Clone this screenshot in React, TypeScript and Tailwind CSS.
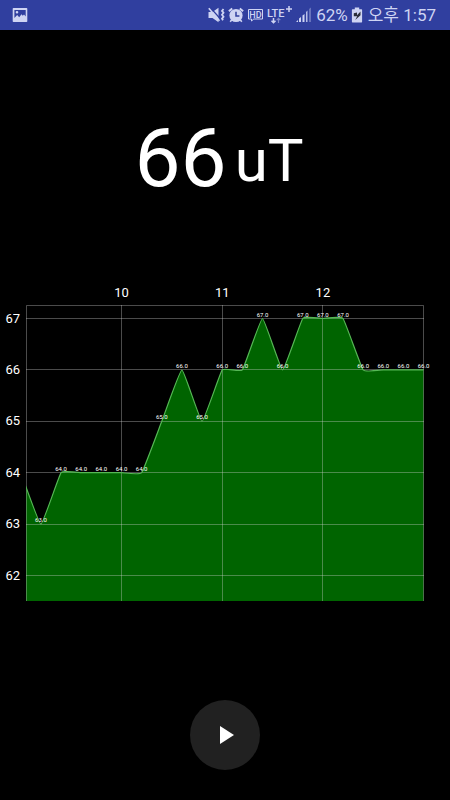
import React, { useState } from 'react';

interface Sample {
  time: number;
  value: number;
}

interface Point {
  x: number;
  y: number;
}

const values = [64, 63, 64, 64, 64, 64, 64, 65, 66, 65, 66, 66, 67, 66, 67, 67, 67, 66, 66, 66, 66];
const samples: Sample[] = values.map((value, i) => ({ time: 9 + i * 0.2, value }));

const PLOT = { left: 26, right: 424, top: 25, bottom: 321 };

const toX = (time: number) => 121.5 + (time - 10) * 100.7;
const toY = (value: number) => 38.5 + (67 - value) * 51.4;

// slightly smoothed line, each handle follows the neighbouring points
function smoothPath(points: Point[], tension = 0.05): string {
  const at = (i: number) => points[Math.min(Math.max(i, 0), points.length - 1)];
  let d = `M${points[0].x},${points[0].y}`;
  for (let i = 1; i < points.length; i++) {
    const before = at(i - 2);
    const prev = at(i - 1);
    const cur = at(i);
    const next = at(i + 1);
    const c1x = prev.x + (cur.x - before.x) * tension;
    const c1y = prev.y + (cur.y - before.y) * tension;
    const c2x = cur.x - (next.x - prev.x) * tension;
    const c2y = cur.y - (next.y - prev.y) * tension;
    d += ` C${c1x},${c1y} ${c2x},${c2y} ${cur.x},${cur.y}`;
  }
  return d;
}

function FieldChart() {
  const points = samples.map(s => ({ x: toX(s.time), y: toY(s.value) }));
  const line = smoothPath(points);
  const area = `${line} V${PLOT.bottom} H${points[0].x} Z`;

  return (
    <svg viewBox="0 0 450 325" className="block w-full" role="img" aria-label="Magnetic field history">
      <defs>
        <clipPath id="plot">
          <rect x={PLOT.left} y={PLOT.top} width={PLOT.right - PLOT.left} height={PLOT.bottom - PLOT.top} />
        </clipPath>
      </defs>

      <g clipPath="url(#plot)">
        <path d={area} fill="#006400" />
      </g>

      <g stroke="#d0d0d0" strokeOpacity="0.36" strokeWidth="1">
        {[67, 66, 65, 64, 63, 62].map(v => (
          <line key={v} x1={PLOT.left} x2={PLOT.right} y1={Math.floor(toY(v)) + 0.5} y2={Math.floor(toY(v)) + 0.5} />
        ))}
        {[10, 11, 12].map(t => (
          <line key={t} y1={PLOT.top} y2={PLOT.bottom} x1={Math.floor(toX(t)) + 0.5} x2={Math.floor(toX(t)) + 0.5} />
        ))}
        <path d="M26.5 321V25.5H423.5V321" fill="none" />
      </g>

      <g clipPath="url(#plot)">
        <path d={line} fill="none" stroke="#55b855" strokeWidth="1.2" />
      </g>

      <g fill="#fff" className="font-['Roboto',sans-serif] text-[13px]">
        {[67, 66, 65, 64, 63, 62].map(v => (
          <text key={v} x="20" y={toY(v) + 4} textAnchor="end">{v}</text>
        ))}
        {[10, 11, 12].map(t => (
          <text key={t} x={toX(t)} y="17" textAnchor="middle">{t}</text>
        ))}
      </g>

      <g fill="#fff" className="font-['Roboto',sans-serif] text-[6px]">
        {points.slice(1).map((p, i) => (
          <text key={i} x={p.x} y={p.y - 2} textAnchor="middle">{samples[i + 1].value.toFixed(1)}</text>
        ))}
      </g>
    </svg>
  );
}

function PictureIcon() {
  return (
    <svg width="16" height="16" viewBox="0 0 16 16" fill="currentColor">
      <path
        fillRule="evenodd"
        d="M1.5 1h13a.8.8 0 0 1 .8.8v12.4a.8.8 0 0 1-.8.8h-13a.8.8 0 0 1-.8-.8V1.8a.8.8 0 0 1 .8-.8ZM2.4 3v8l2.8-3 2 2.2 2.3-3 1.3 1.600 1.2-1.2 1.7 1.8V3H2.4ZM5 4a1.3 1.3 0 1 1 0 2.6A1.3 1.3 0 0 1 5 4Z"
      />
    </svg>
  );
}

function MuteIcon() {
  return (
    <svg width="17" height="16" viewBox="0 0 17 16" fill="none" stroke="currentColor">
      <path d="M.5 5h4L10.5.8v14.4L4.500 11h-4Z" fill="currentColor" stroke="none" />
      <path d="M2.3.6 12.500 12" stroke="#303f9f" strokeWidth="1.4" />
      <path d="M.8 1.2 11.5 13.8" strokeWidth="1.6" />
      <path d="m15.500 2-1.500 1.900 1.500 1.900-1.500 2 1.500 1.900-1.500 1.900 1 1.600" strokeWidth="1.8" />
    </svg>
  );
}

function AlarmIcon() {
  return (
    <svg width="16" height="16" viewBox="0 0 16 16" fill="none" stroke="currentColor">
      <path d="M.9 4.3 4.2 1.4M15.1 4.3l-3.3-2.9" strokeWidth="2" />
      <circle cx="8" cy="8.5" r="6.6" fill="currentColor" stroke="none" />
      <path d="m3.8 12.8-1.6 2M12.2 12.8l1.6 2" strokeWidth="1.6" />
      <path d="M8 4.8v4.1h3.4" stroke="#303f9f" strokeWidth="1.5" />
    </svg>
  );
}

function HdIcon() {
  return (
    <svg width="17" height="16" viewBox="0 0 17 16" fill="none">
      <path d="M1.5 2.5h14V12H6.8l-2.300 2v-2h-3Z" stroke="currentColor" />
      <text x="8.5" y="10.5" textAnchor="middle" fill="currentColor" className="font-['Roboto',sans-serif] text-[9px] font-medium">HD</text>
    </svg>
  );
}

function LteIcon() {
  return (
    <svg width="26" height="20" viewBox="0 0 26 20" fill="none" stroke="currentColor">
      <text x="0" y="12" fill="currentColor" stroke="none" className="font-['Roboto',sans-serif] text-[11px] font-medium">LTE</text>
      <path d="M22 1v6M19 4h6" strokeWidth="1.5" />
      <path d="M6.5 13v4.5M4.5 15.7l2 2 2-2" strokeWidth="1.5" />
      <path d="M11.5 18v-4.5M9.7 15.2l1.8-1.9 1.8 1.9" strokeWidth="1.2" opacity="0.5" />
    </svg>
  );
}

function SignalIcon() {
  return (
    <svg width="16" height="16" viewBox="0 0 16 16" fill="currentColor">
      <path d="M0 15l2-2v2Z" />
      <path d="M3 11.5 5 10v5H3Z" />
      <path d="M6.500 8.500l2-1.500v8h-2Z" />
      <path d="M10 5l1.500-1.500V15H10Z" opacity="0.85" />
      <path d="M13 2l2-1.500V15h-2Z" opacity="0.35" />
    </svg>
  );
}

function BatteryIcon() {
  return (
    <svg width="12" height="16" viewBox="0 0 12 16" fill="currentColor">
      <path d="M3.8.5h4.4v1.7h2.3a.6.6 0 0 1 .6.6v12a.6.6 0 0 1-.6.6h-9a.6.6 0 0 1-.6-.6v-12a.6.6 0 0 1 .6-.6h2.3Z" />
      <path d="M2.8 6.3 6 5.600v2.6l3.5-3.7v3.7L4.2 13l2-3.8H2.8Z" fill="#2b2f3a" />
    </svg>
  );
}

function StatusBar() {
  return (
    <header className="flex h-[30px] items-center justify-between bg-[#303f9f] pl-3 pr-3.5 text-[#ced4f3]">
      <PictureIcon />
      <div className="flex items-center font-['Roboto','Noto_Sans_CJK_KR',sans-serif] text-[17px] leading-5">
        <div className="mr-1 flex items-center gap-[3px]">
          <MuteIcon />
          <AlarmIcon />
          <HdIcon />
          <LteIcon />
          <SignalIcon />
        </div>
        <span className="mr-[3px]">62%</span>
        <BatteryIcon />
        <span className="ml-[5px]">오후 1:57</span>
      </div>
    </header>
  );
}

export default function App() {
  const [running, setRunning] = useState(false);

  return (
    <div className="flex min-h-screen flex-col bg-black font-['Roboto',sans-serif] text-white">
      <StatusBar />

      <main className="flex flex-1 flex-col items-center">
        <h1 className="mt-[88px] mb-[82px] flex items-end gap-2 pr-3">
          <span className="text-[82px] leading-20">66</span>
          <span className="text-[60px] leading-[74px]">uT</span>
        </h1>

        <FieldChart />

        <button
          type="button"
          aria-label={running ? 'Pause' : 'Start'}
          onClick={() => setRunning(!running)}
          className="mt-auto mb-[30px] flex size-[70px] items-center justify-center rounded-full bg-[#212121]"
        >
          <svg width="30" height="30" viewBox="0 0 30 30" fill="#fff">
            {running ? <path d="M8 6h5v18H8zM17 6h5v18h-5z" /> : <path d="M10 6v18l14-9Z" />}
          </svg>
        </button>
      </main>
    </div>
  );
}
